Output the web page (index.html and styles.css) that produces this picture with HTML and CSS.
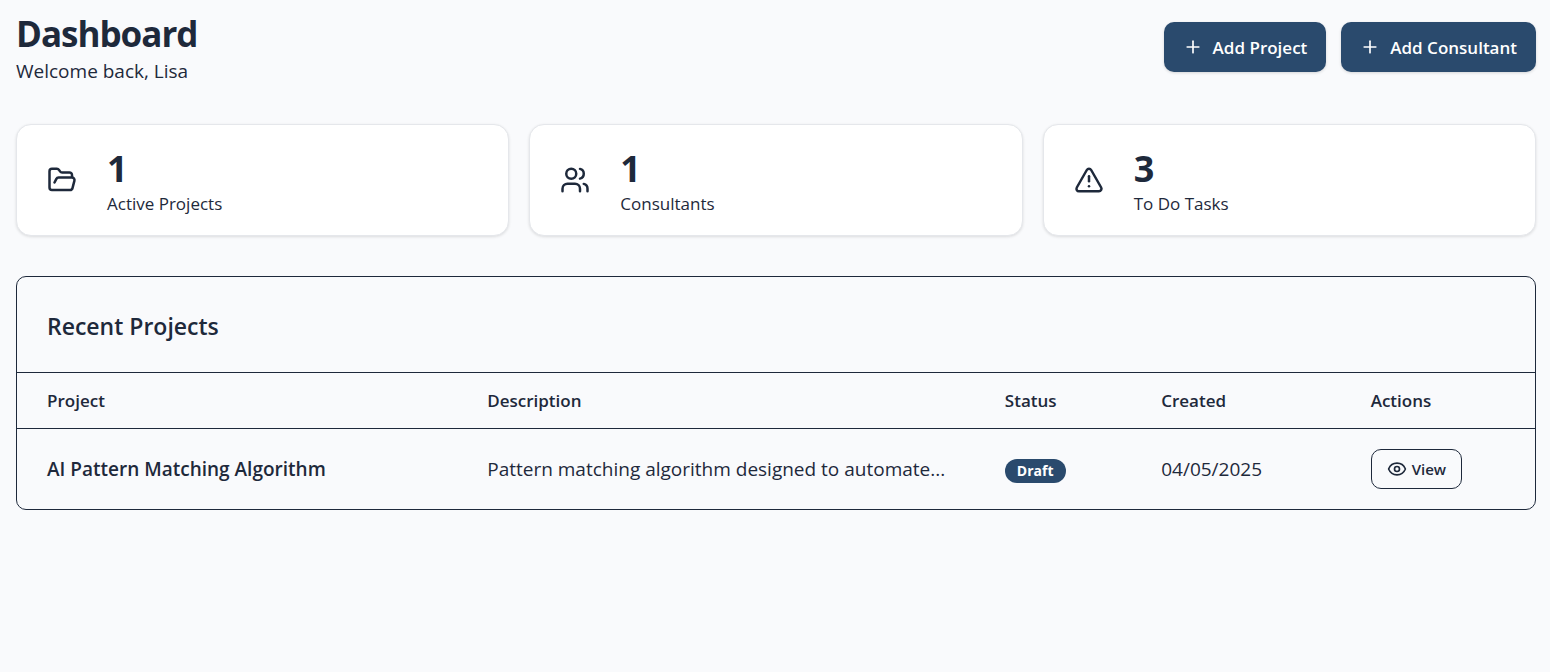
FILE: index.html
```html
<!DOCTYPE html>
<html lang="en">
<head>
<meta charset="utf-8">
<meta name="viewport" content="width=device-width, initial-scale=1">
<title>Dashboard</title>
<link rel="stylesheet" href="styles.css">
</head>
<body>
<main class="dashboard">
  <header class="page-header">
    <div>
      <h1 class="page-title">Dashboard</h1>
      <p class="page-subtitle">Welcome back, Lisa</p>
    </div>
    <div class="page-actions">
      <button class="btn btn-primary" type="button">
        <svg class="icon icon-plus" viewBox="0 0 24 24" aria-hidden="true"><path d="M5 12h14"/><path d="M12 5v14"/></svg>
        <span>Add Project</span>
      </button>
      <button class="btn btn-primary" type="button">
        <svg class="icon icon-plus" viewBox="0 0 24 24" aria-hidden="true"><path d="M5 12h14"/><path d="M12 5v14"/></svg>
        <span>Add Consultant</span>
      </button>
    </div>
  </header>

  <section class="stats" aria-label="Overview">
    <article class="stat-card">
      <svg class="icon icon-stat" viewBox="0 0 24 24" aria-hidden="true"><path d="m6 14 1.5-2.9A2 2 0 0 1 9.24 10H20a2 2 0 0 1 1.94 2.5l-1.54 6a2 2 0 0 1-1.95 1.5H4a2 2 0 0 1-2-2V5a2 2 0 0 1 2-2h3.9a2 2 0 0 1 1.69.9l.81 1.2a2 2 0 0 0 1.67.9H18a2 2 0 0 1 2 2v2"/></svg>
      <div>
        <p class="stat-value">1</p>
        <p class="stat-label">Active Projects</p>
      </div>
    </article>
    <article class="stat-card">
      <svg class="icon icon-stat" viewBox="0 0 24 24" aria-hidden="true"><path d="M16 21v-2a4 4 0 0 0-4-4H6a4 4 0 0 0-4 4v2"/><circle cx="9" cy="7" r="4"/><path d="M22 21v-2a4 4 0 0 0-3-3.87"/><path d="M16 3.13a4 4 0 0 1 0 7.75"/></svg>
      <div>
        <p class="stat-value">1</p>
        <p class="stat-label">Consultants</p>
      </div>
    </article>
    <article class="stat-card">
      <svg class="icon icon-stat" viewBox="0 0 24 24" aria-hidden="true"><path d="m21.73 18-8-14a2 2 0 0 0-3.48 0l-8 14A2 2 0 0 0 4 21h16a2 2 0 0 0 1.73-3"/><path d="M12 9v4"/><path d="M12 17h.01"/></svg>
      <div>
        <p class="stat-value">3</p>
        <p class="stat-label">To Do Tasks</p>
      </div>
    </article>
  </section>

  <section class="panel" aria-labelledby="recent-title">
    <h2 class="panel-title" id="recent-title">Recent Projects</h2>
    <table class="projects">
      <colgroup>
        <col class="col-project"><col class="col-description"><col class="col-status"><col class="col-created"><col>
      </colgroup>
      <thead>
        <tr>
          <th scope="col">Project</th>
          <th scope="col">Description</th>
          <th scope="col">Status</th>
          <th scope="col">Created</th>
          <th scope="col">Actions</th>
        </tr>
      </thead>
      <tbody>
        <tr>
          <td class="project-name">AI Pattern Matching Algorithm</td>
          <td>Pattern matching algorithm designed to automate...</td>
          <td><span class="badge">Draft</span></td>
          <td>04/05/2025</td>
          <td>
            <button class="btn btn-outline" type="button">
              <svg class="icon icon-eye" viewBox="0 0 24 24" aria-hidden="true"><path d="M2.06 12.35a1 1 0 0 1 0-.7 10.75 10.75 0 0 1 19.88 0 1 1 0 0 1 0 .7 10.75 10.75 0 0 1-19.88 0"/><circle cx="12" cy="12" r="3"/></svg>
              <span>View</span>
            </button>
          </td>
        </tr>
      </tbody>
    </table>
  </section>
</main>
</body>
</html>
```
FILE: styles.css
```css
:root {
  --ink: #1e293b;
  --page: #f9fafc;
  --primary: #2a4a6d;
  --line: #e5e7eb;
}

* {
  box-sizing: border-box;
}

body {
  margin: 0;
  background: var(--page);
  color: var(--ink);
  font-family: "Segoe UI", "Open Sans", "Noto Sans", sans-serif;
  font-size: 19px;
  line-height: 30px;
}

h1, h2, p {
  margin: 0;
}

.dashboard {
  padding: 10px 14px 32px 16px;
}

.page-header {
  display: flex;
  justify-content: space-between;
  align-items: center;
  gap: 20px;
  margin-bottom: 40px;
}

.page-title {
  font-size: 35px;
  font-weight: 700;
  line-height: 48px;
  letter-spacing: -1px;
}

.page-subtitle {
  line-height: 26px;
}

.page-actions {
  display: flex;
  gap: 15px;
}

.btn {
  display: inline-flex;
  align-items: center;
  justify-content: center;
  font-family: inherit;
  font-weight: 600;
  white-space: nowrap;
  border-radius: 10px;
  cursor: pointer;
}

.btn-primary {
  height: 50px;
  padding: 0 19px;
  gap: 10px;
  border: 0;
  background: var(--primary);
  color: #fff;
  font-size: 17px;
  box-shadow: 0 1px 3px rgb(0 0 0 / 15%);
}

.btn-outline {
  height: 40px;
  padding: 0 15px;
  gap: 5px;
  border: 1px solid var(--ink);
  background: transparent;
  color: var(--ink);
  font-size: 15px;
  vertical-align: middle;
}

.icon {
  flex: none;
  fill: none;
  stroke: currentColor;
  stroke-width: 2;
  stroke-linecap: round;
  stroke-linejoin: round;
}

.icon-plus {
  width: 20px;
  height: 20px;
}

.icon-stat {
  width: 30px;
  height: 30px;
}

.icon-eye {
  width: 20px;
  height: 20px;
}

.stats {
  display: grid;
  grid-template-columns: repeat(3, 1fr);
  gap: 20px;
  margin-bottom: 40px;
}

.stat-card {
  display: flex;
  align-items: center;
  gap: 30px;
  padding: 20px 30px;
  border: 1px solid var(--line);
  border-radius: 15px;
  background: #fff;
  box-shadow: 0 1px 3px rgb(0 0 0 / 12%);
}

.stat-value {
  font-size: 36px;
  font-weight: 700;
  line-height: 48px;
}

.stat-label {
  font-size: 17px;
  line-height: 22px;
}

.panel {
  border: 1px solid var(--ink);
  border-radius: 10px;
  overflow: hidden;
}

.panel-title {
  padding: 32px 30px 28px;
  font-size: 23px;
  font-weight: 600;
  line-height: 35px;
}

.projects {
  width: 100%;
  border-collapse: collapse;
  table-layout: fixed;
}

.col-project {
  width: 29%;
}

.col-description {
  width: 34.1%;
}

.col-status {
  width: 10.3%;
}

.col-created {
  width: 13.8%;
}

.projects th,
.projects td {
  padding: 0 30px;
  border-top: 1px solid var(--ink);
  text-align: left;
  vertical-align: middle;
  white-space: nowrap;
}

.projects th {
  height: 56px;
  font-size: 17px;
  font-weight: 600;
}

.projects td {
  height: 80px;
}

.projects .project-name {
  font-weight: 600;
}

.badge {
  display: inline-block;
  padding: 0 12px;
  border-radius: 12px;
  background: var(--primary);
  color: #fff;
  font-size: 14px;
  font-weight: 700;
  line-height: 24px;
  vertical-align: middle;
}
```
